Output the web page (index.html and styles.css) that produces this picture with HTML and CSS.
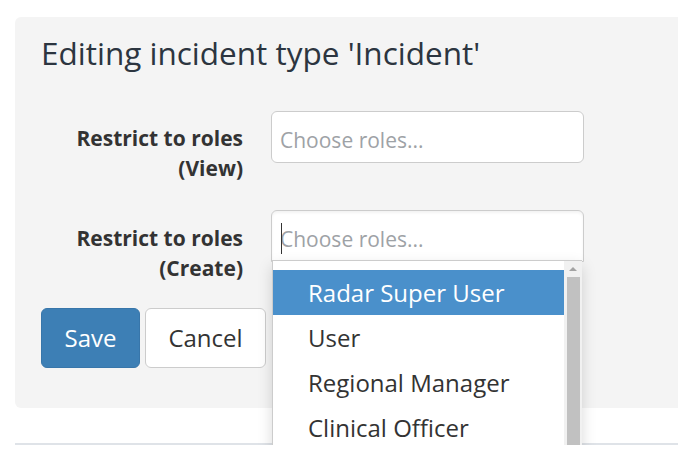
FILE: index.html
```html
<!DOCTYPE html>
<html>
<head>
<meta charset="utf-8">
<link rel="stylesheet" href="styles.css">
</head>
<body>
<div class="page">
  <div class="panel">
    <h3 class="title">Editing incident type 'Incident'</h3>
    <div class="form">
      <div class="row">
        <label class="label">Restrict to roles<br>(View)</label>
        <div class="field">
          <div class="input"><span class="placeholder">Choose roles...</span></div>
        </div>
      </div>
      <div class="row">
        <label class="label">Restrict to roles<br>(Create)</label>
        <div class="field">
          <div class="input focus"><span class="caret"></span><span class="placeholder">Choose roles...</span></div>
          <div class="dropdown">
            <ul class="options">
              <li class="option active">Radar Super User</li>
              <li class="option">User</li>
              <li class="option">Regional Manager</li>
              <li class="option">Clinical Officer</li>
            </ul>
            <div class="scrollbar">
              <span class="arrow"></span>
              <span class="thumb"></span>
            </div>
          </div>
        </div>
      </div>
      <div class="actions">
        <button class="btn btn-primary">Save</button>
        <button class="btn btn-default">Cancel</button>
      </div>
    </div>
  </div>
  <div class="rule"></div>
</div>
</body>
</html>
```
FILE: styles.css
```css
html, body {
  margin: 0;
  padding: 0;
  background: #fff;
  overflow: hidden;
}
body {
  font-family: "Open Sans", "Liberation Sans", sans-serif;
  font-size: 21px;
  line-height: 30px;
  color: #333;
}
.page {
  padding: 17px 0 0 15px;
}
.panel {
  background: #f4f4f4;
  border-radius: 6px 0 0 6px;
  padding: 19px 0 40px 26px;
}
.title {
  margin: 0 0 40px 0;
  font-size: 31.5px;
  line-height: 34.65px;
  font-weight: 400;
  color: #2c3540;
}
.form {
  display: flex;
  flex-direction: column;
  gap: 27px;
}
.row {
  display: grid;
  grid-template-columns: 202px 313px;
  column-gap: 28px;
  align-items: start;
}
.label {
  display: block;
  text-align: right;
  font-weight: 700;
  padding-top: 12.5px;
  color: #333;
}
.field {
  position: relative;
}
.input {
  box-sizing: border-box;
  height: 52px;
  background: #fff;
  border: 1px solid #ccc;
  border-radius: 6px;
  padding: 13px 8px 7px 8px;
  display: flex;
  align-items: center;
  position: relative;
}
.input.focus {
  box-shadow: inset 0 2px 3px rgba(0,0,0,0.05);
  border-bottom-left-radius: 0;
  border-bottom-right-radius: 0;
}
.placeholder {
  color: #9ea2a6;
  white-space: nowrap;
}
.caret {
  position: absolute;
  left: 9px;
  top: 12px;
  width: 1px;
  height: 31px;
  background: #333;
}
.dropdown {
  position: absolute;
  top: 50px;
  left: 1px;
  width: 310px;
  height: 210px;
  box-sizing: border-box;
  background: #fff;
  border: 1px solid #ccc;
  border-right: none;
  display: flex;
  box-shadow: 0 6px 14px rgba(0,0,0,0.15);
  z-index: 5;
}
.options {
  list-style: none;
  margin: 0;
  padding: 9px 0 0 0;
  flex: 1;
}
.option {
  height: 45px;
  line-height: 45px;
  font-size: 24px;
  padding-left: 35px;
  color: #333;
  white-space: nowrap;
}
.option.active {
  background: #4a90cb;
  color: #fff;
}
.scrollbar {
  width: 18px;
  background: #f1f1f1;
  position: relative;
  display: flex;
  flex-direction: column;
  align-items: center;
}
.arrow {
  margin-top: 6px;
  width: 0;
  height: 0;
  border-left: 4px solid transparent;
  border-right: 4px solid transparent;
  border-bottom: 4px solid #a3a3a3;
}
.thumb {
  margin-top: 6px;
  width: 13px;
  flex: 1;
  background: #c1c1c1;
}
.actions {
  display: flex;
  gap: 5px;
  margin-top: -2px;
}
.btn {
  box-sizing: border-box;
  height: 60px;
  font-family: "Open Sans", "Liberation Sans", sans-serif;
  font-size: 24px;
  border-radius: 6px;
  border: 1px solid transparent;
  padding: 0 21px;
  cursor: pointer;
}
.btn-primary {
  width: 99px;
  background: #3d7fb5;
  border-color: #3876aa;
  color: #fff;
}
.btn-default {
  width: 121px;
  background: #fff;
  border-color: #ccc;
  color: #333;
}
.rule {
  margin-top: 35px;
  height: 2px;
  background: #dfe3e8;
}
```
